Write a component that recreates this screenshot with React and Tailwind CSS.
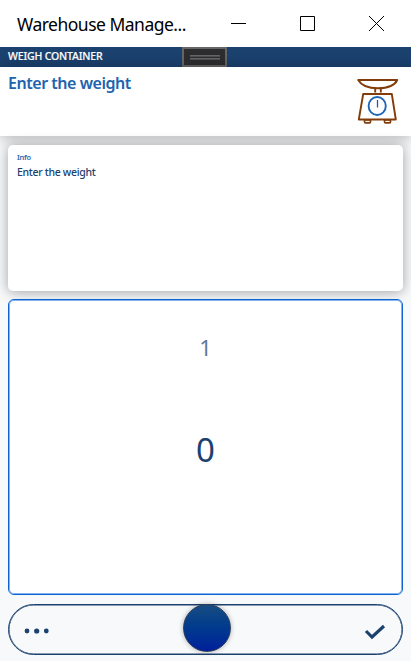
function TitleBar() {
  return (
    <header className="flex h-[47px] shrink-0 items-center bg-white">
      <h1 className="w-[204px] whitespace-nowrap pl-[17px] text-[17.5px] leading-6 tracking-[-0.51px] text-black">Warehouse Manage...</h1>
      <div className="flex w-[207px]">
        {["M26.5 8.5h15", "M27.5 1.5h14v14h-14z", "M27 1l15 15M42 1L27 16"].map((d, i) => (
          <svg key={d} className="h-[17px] w-[69px]" viewBox={i === 0 ? "-0.5 0 69 17" : "0 0 69 17"} fill="none" stroke="#000" strokeWidth="1">
            <path d={d} />
          </svg>
        ))}
      </div>
    </header>
  );
}

function ScaleIcon() {
  return (
    <svg className="h-[48px] w-[42px]" viewBox="357 77 42 48" fill="none" stroke="#833c0b" strokeWidth="1.9" strokeLinejoin="round">
      <path d="M358.2 80H397.2C395 85 388 88.2 377.8 88.2S361 85 358.2 80Z" />
      <path d="M375.2 88v4.5M380.8 88v4.5" />
      <path d="M363.2 94H391.8L395.8 119.5H358.8Z" />
      <rect x="364.5" y="119.8" width="6" height="3" rx="1" strokeWidth="1.7" />
      <rect x="384.5" y="119.8" width="6" height="3" rx="1" strokeWidth="1.7" />
      <ellipse cx="377.2" cy="106" rx="8.6" ry="9" stroke="#1f66b5" />
      <path d="M377.5 100v7.5" stroke="#1f5ca0" strokeWidth="1.3" />
    </svg>
  );
}

export default function App() {
  return (
    <div className="flex h-[661px] w-[411px] flex-col overflow-hidden bg-[#f8f9fb] font-['Noto_Sans',sans-serif]">
      <TitleBar />
      <div className="flex h-5 shrink-0 bg-[#1b416f]">
        <span className="w-[182px] whitespace-nowrap pl-2 text-[10.5px] font-medium leading-[19px] tracking-[-0.17px] text-white [-webkit-text-stroke:0.2px_white]">WEIGH CONTAINER</span>
        <div className="flex h-5 w-[45px] flex-col items-center justify-center gap-px border-2 border-[#666] bg-[#2d2d30]">
          <span className="h-[2px] w-[30px] border-t border-[#666] bg-[#505050]" />
          <span className="h-[2px] w-[30px] border-t border-[#666] bg-[#505050]" />
        </div>
      </div>
      <section className="relative z-10 flex h-[69px] shrink-0 justify-between bg-white pl-2 pr-3 shadow-[0_1px_14px_rgba(0,0,0,0.3)]">
        <h2 className="whitespace-nowrap pt-1 text-[16px] font-semibold leading-6 tracking-[-0.46px] text-[#2163ad]">Enter the weight</h2>
        <div className="pt-[10px]"><ScaleIcon /></div>
      </section>
      <section className="relative z-10 mx-2 mt-[9px] h-[146px] shrink-0 rounded-[5px] bg-white px-[9px] pt-[7px] shadow-[0_1px_13px_rgba(0,0,0,0.36)]">
        <div className="text-[7.5px] font-semibold leading-[11px] tracking-[-0.25px] text-[#2c68b0]">Info</div>
        <div className="whitespace-nowrap text-[10.5px] font-medium leading-[18px] tracking-[-0.32px] text-[#1b416f]">Enter the weight</div>
      </section>
      <main className="relative z-10 mx-2 mt-2 flex h-[296px] shrink-0 flex-col items-center rounded-[6px] border border-[#0f62d0] bg-white text-[#1b416f] shadow-[inset_0_0_0_1px_#84b4ee]">
        <div className="mt-[31px] text-[22px] leading-8 opacity-70">1</div>
        <div className="mt-[62px] text-[33px] leading-[49px]">0</div>
      </main>
      <footer className="mx-2 mt-[9px] flex h-[51px] shrink-0 items-center justify-between rounded-full border border-[#1b416f] bg-[#f8f9fb] pl-[15px] pr-4 shadow-[inset_0_0_0_0.5px_#1b416f]">
        <svg className="mt-[2px] h-[6px] w-[26px]" viewBox="0 0 26 6" fill="#1b416f">
          <circle cx="3" cy="3" r="2.4" />
          <circle cx="12.7" cy="3" r="2.6" />
          <circle cx="22.3" cy="3" r="2.4" />
        </svg>
        <button className="mb-[3px] mr-[1px] size-[48px] shrink-0 rounded-full border border-[#303f58] bg-linear-to-b from-[#174c80] to-[#001d9b] shadow-[0_0_5px_rgba(0,0,0,0.3)]" aria-label="Scan" />
        <svg className="mt-[5px] h-[16px] w-[22px]" viewBox="0 0 22 16" fill="none" stroke="#1b416f" strokeWidth="3.1">
          <path d="M2 7l6 6L20 2" />
        </svg>
      </footer>
    </div>
  );
}
